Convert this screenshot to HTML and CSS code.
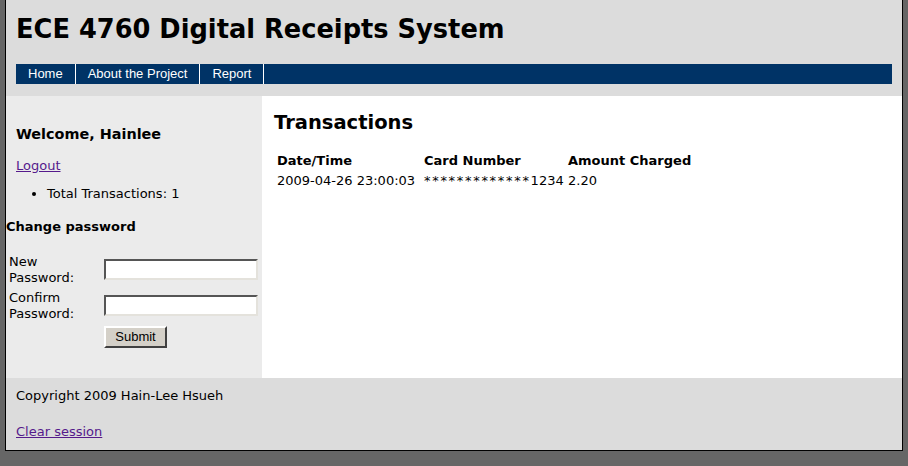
FILE: index.html
```html
<!DOCTYPE html>
<html>
	<head>
		<meta charset="utf-8" />
		<title>ECE 4760 Digital Receipts System</title>
		<link rel="stylesheet" href="styles.css">
	</head>
	<body>
		<div id="container">
			<div id="header">
				<h1>ECE 4760 Digital Receipts System</h1>
				<ul id="nav">
					<li><a href="#">Home</a></li>
					<li><a href="#">About the Project</a></li>
					<li><a href="#">Report</a></li>
				</ul>
			</div>
			<div id="content">
				<div id="left">
					<h3 class="welcome">Welcome, Hainlee</h3>
					<p class="logout"><a href="#">Logout</a></p>
					<ul class="stats">
						<li>Total Transactions: 1</li>
					</ul>
					<h4>Change password</h4>
					<form method="post" action="#">
						<table class="psd">
							<tr>
								<td class="label">New<br/>Password:</td>
								<td><input type="password" name="newpsd"/></td>
							</tr>
							<tr>
								<td class="label">Confirm<br/>Password:</td>
								<td><input type="password" name="confirmpsd"/></td>
							</tr>
							<tr>
								<td></td>
								<td><input type="submit" value="Submit" class="btn"/></td>
							</tr>
						</table>
					</form>
				</div>
				<div id="main">
					<h2>Transactions</h2>
					<table class="trans">
						<tr>
							<th class="date">Date/Time</th>
							<th class="card">Card Number</th>
							<th>Amount Charged</th>
						</tr>
						<tr>
							<td>2009-04-26 23:00:03</td>
							<td><span class="mask">*************</span>1234</td>
							<td>2.20</td>
						</tr>
					</table>
				</div>
			</div>
			<div id="footer">
				<p>Copyright 2009 Hain-Lee Hsueh</p>
				<p class="clear"><a href="#">Clear session</a></p>
			</div>
		</div>
	</body>
</html>
```

FILE: styles.css
```css
*{margin:0;padding:0}
body{background:#666;font-family:"DejaVu Sans",Verdana,sans-serif;font-size:13px;line-height:16px;color:#000;}
a{color:#551a8b;}
td,th{padding:1px;}
#container{width:896px;margin:0 auto;border:1px solid #000;border-top:none;}

#header{background:#dcdcdc;padding:14px 10px 12px;}
#header h1{font-size:25.7px;line-height:30px;font-weight:bold;margin-bottom:20px;}
#nav{display:flex;list-style:none;height:20px;background:#036;}
#nav a{display:block;padding:0 12px;line-height:20px;border-right:1px solid #fff;
	   color:#fff;text-decoration:none;font-family:"Liberation Sans",Arial,sans-serif;font-size:13px;}

#content{display:flex;min-height:282px;}
#left{width:256px;background:#ebebeb;}
.welcome{font-size:14.4px;line-height:18px;margin:29px 0 15px;padding-left:10px;}
.logout{padding-left:10px;}
.stats{margin-top:12px;padding-left:41px;}
#left h4{font-size:13px;margin-top:17px;}
.psd{margin-top:15.5px;}
.psd td{vertical-align:middle;}
.psd .label{width:91px;}
.psd input{box-sizing:border-box;width:154px;height:21px;border:2px solid;
		   border-color:#555 #e4e2dc #e4e2dc #555;background:#fff;display:block;}
.psd input.btn{width:63px;height:22px;background:#d4d0c8;border:2px solid;
			   border-color:#fff #404040 #404040 #fff;font-family:"Liberation Sans",Arial,sans-serif;font-size:13px;color:#000;}

#main{flex:1;background:#fff;padding:0 12px;}
#main h2{font-size:19.5px;line-height:24px;margin-top:15px;}
.trans{margin-top:15px;}
.trans th{text-align:left;font-weight:bold;}
.trans .date{width:143px;}
.trans .card{width:140px;}
.mask{letter-spacing:1.7px;}

#footer{background:#dcdcdc;padding:10px;}
#footer .clear{margin-top:20px;}
```
